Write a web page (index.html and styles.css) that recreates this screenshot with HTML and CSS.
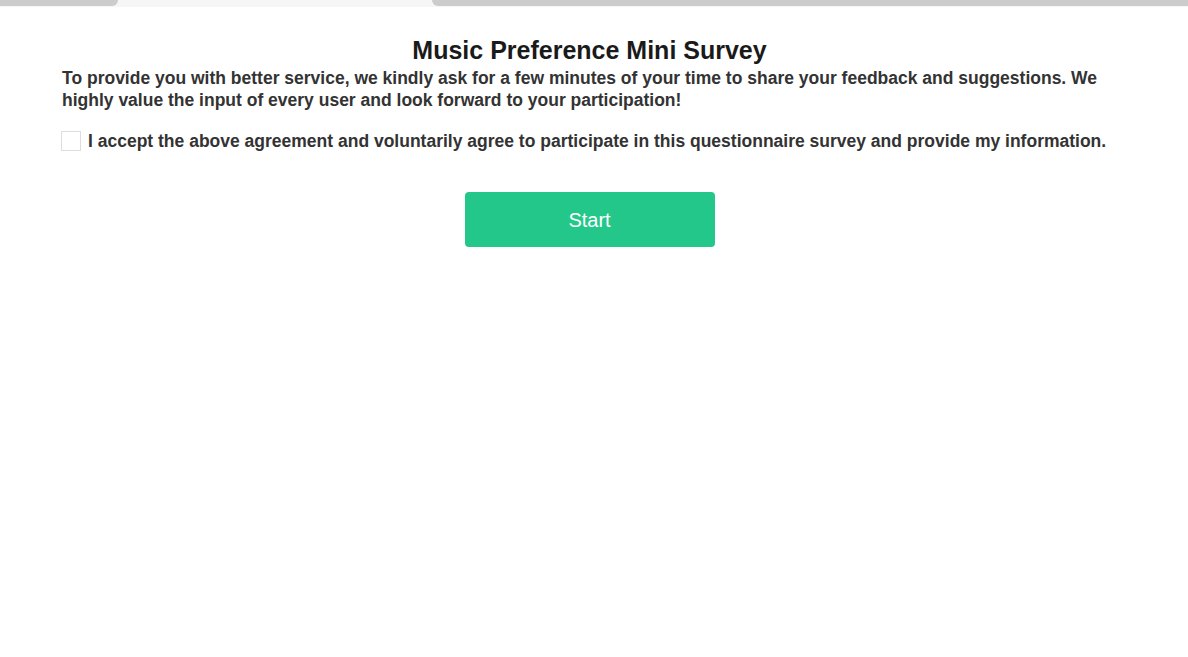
FILE: index.html
```html
<!DOCTYPE html>
<html lang="en">
<head>
<meta charset="utf-8">
<title>Music Preference Mini Survey</title>
<link rel="stylesheet" href="styles.css">
</head>
<body>
<div class="topbar">
  <div class="seg seg-left"></div>
  <div class="seg seg-mid"></div>
  <div class="seg seg-right"></div>
</div>
<main class="survey">
  <h1 class="title">Music Preference Mini Survey</h1>
  <p class="intro">To provide you with better service, we kindly ask for a few minutes of your time to share your feedback and suggestions. We highly value the input of every user and look forward to your participation!</p>
  <label class="agree">
    <span class="box"></span>
    <span class="agree-text">I accept the above agreement and voluntarily agree to participate in this questionnaire survey and provide my information.</span>
  </label>
  <div class="actions">
    <button class="start" type="button">Start</button>
  </div>
</main>
</body>
</html>
```
FILE: styles.css
```css
html, body {
  margin: 0;
  padding: 0;
  background: #ffffff;
}
body {
  font-family: "Liberation Sans", Arial, sans-serif;
  color: #333333;
}
.topbar {
  display: flex;
  height: 7px;
  background: #f6f6f6;
}
.seg {
  height: 6px;
}
.seg-left {
  width: 118px;
  background: #cccccc;
  border-bottom-right-radius: 6px;
}
.seg-mid {
  width: 314px;
  background: #f6f6f6;
}
.seg-right {
  flex: 1;
  background: #cccccc;
  border-bottom-left-radius: 6px;
}
.survey {
  margin: 0 71px 0 62px;
  padding-top: 29px;
}
.title {
  margin: 0;
  text-align: center;
  font-size: 25px;
  line-height: 28px;
  font-weight: bold;
  color: #1a1a1a;
}
.intro {
  margin: 3px 0 0;
  font-size: 17.5px;
  line-height: 22px;
  font-weight: bold;
  color: #333333;
}
.agree {
  display: flex;
  align-items: center;
  gap: 7px;
  margin-top: 20px;
  margin-left: -1px;
  cursor: pointer;
}
.box {
  width: 18px;
  height: 18px;
  border: 1px solid #dddddd;
  background: #ffffff;
  flex: none;
}
.agree-text {
  font-size: 17.5px;
  line-height: 20px;
  font-weight: bold;
  color: #333333;
}
.actions {
  display: flex;
  justify-content: center;
  margin-top: 41px;
}
.start {
  width: 250px;
  height: 55px;
  border: none;
  border-radius: 4px;
  background: #24c78a;
  color: #ffffff;
  font-family: "Liberation Sans", Arial, sans-serif;
  font-size: 20px;
  padding-top: 2px;
  cursor: pointer;
}
```
